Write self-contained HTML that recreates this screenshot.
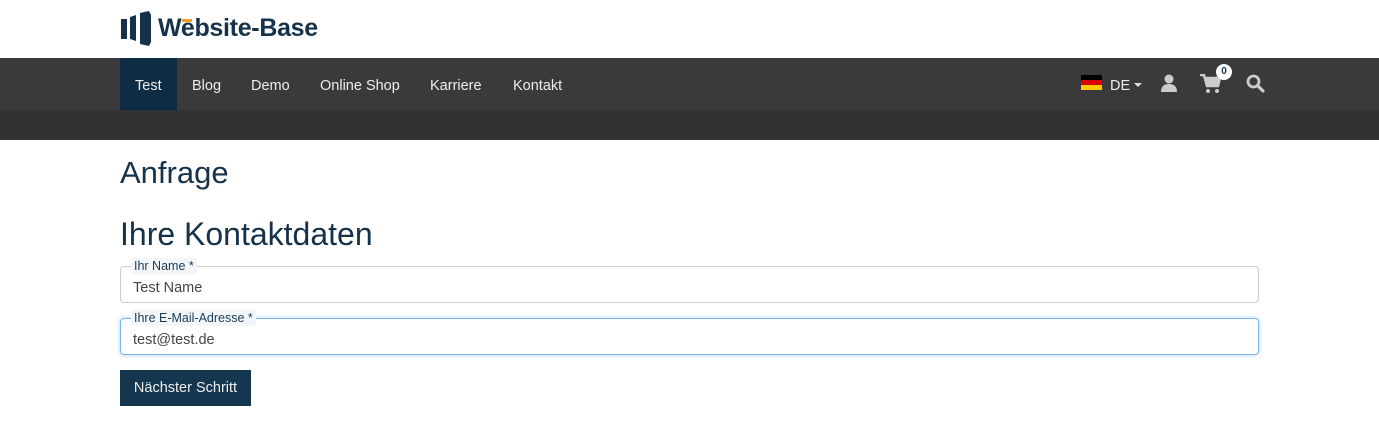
<!DOCTYPE html>
<html><head><meta charset="utf-8"><style>
*{margin:0;padding:0;box-sizing:border-box}
body{width:1379px;height:439px;background:#fff;font-family:"Liberation Sans",sans-serif;color:#333;position:relative;overflow:hidden}
.abs{position:absolute}
.nav{top:58px;left:0;width:1379px;height:52px;background:#3a3a3c}
.band{top:110px;left:0;width:1379px;height:30px;background:#323232}
.nav a{position:absolute;top:2px;height:52px;line-height:52px;color:#eee;font-size:14.5px;text-decoration:none}
h1,h2{position:absolute;font-weight:normal;color:#15324a;left:120px}
.field{position:absolute;left:120px;width:1139px;height:37px;border:1px solid #ccc;border-radius:4px;font-size:14.5px;color:#444;padding:13px 0 0 12px}
.lbl{position:absolute;left:10px;top:-9px;background:#f4f7fa;font-size:12.5px;color:#1a3b57;padding:0 3px;line-height:16px}
</style></head><body>
<svg class="abs" style="left:121px;top:11px" width="34" height="35" viewBox="0 0 34 35">
<polygon points="0,8 6,8 6,28 0,28" fill="#15324a"/>
<polygon points="9,6 15,4 15,30 9,28" fill="#15324a"/>
<polygon points="19,2 28,0 30,4 30,31 28,35 19,33" fill="#15324a"/>
</svg>
<div class="abs" style="left:158px;top:14px;font-size:25px;font-weight:bold;color:#15324a;letter-spacing:-0.3px">Website-Base</div>
<div class="abs" style="left:182px;top:19px;width:10px;height:3px;background:#f0a020"></div>
<div class="abs nav">
<div class="abs" style="left:120px;top:0;width:57px;height:52px;background:#0e2d44"></div>
<a style="left:135px">Test</a><a style="left:192px">Blog</a><a style="left:251px">Demo</a><a style="left:320px">Online Shop</a><a style="left:430px">Karriere</a><a style="left:513px">Kontakt</a>
<div class="abs" style="left:1081px;top:17px;width:21px;height:15px"><div style="height:5px;background:#000"></div><div style="height:5px;background:#d00"></div><div style="height:5px;background:#fc0"></div></div>
<a style="left:1110px">DE</a>
<div class="abs" style="left:1134px;top:25px;border-left:4px solid transparent;border-right:4px solid transparent;border-top:4px solid #ddd"></div>
<svg class="abs" style="left:1160px;top:16px" width="18" height="18" viewBox="0 0 18 18"><circle cx="9" cy="5" r="4.5" fill="#ccc"/><path d="M1 18 Q1 10 9 10 Q17 10 17 18Z" fill="#ccc"/></svg>
<svg class="abs" style="left:1200px;top:16px" width="22" height="20" viewBox="0 0 22 20"><path d="M0 1h4l3 11h11l2-8H6" stroke="#ccc" stroke-width="2.5" fill="#ccc"/><circle cx="8" cy="17" r="2" fill="#ccc"/><circle cx="17" cy="17" r="2" fill="#ccc"/></svg>
<div class="abs" style="left:1216px;top:6px;width:16px;height:16px;border-radius:8px;background:#fff;color:#15324a;font-size:10px;font-weight:bold;text-align:center;line-height:16px">0</div>
<svg class="abs" style="left:1246px;top:16px" width="19" height="19" viewBox="0 0 19 19"><circle cx="7.5" cy="7.5" r="5.5" stroke="#ccc" stroke-width="2.8" fill="none"/><path d="M11.5 11.5L17 17" stroke="#ccc" stroke-width="3.2" stroke-linecap="round"/></svg>
</div>
<div class="abs band"></div>
<h1 style="top:155px;font-size:31px">Anfrage</h1>
<h2 style="top:216px;font-size:32px">Ihre Kontaktdaten</h2>
<div class="field" style="top:266px"><span class="lbl">Ihr Name *</span>Test Name</div>
<div class="field" style="top:318px;border-color:#7cb5ec;box-shadow:0 0 4px rgba(100,160,230,.5)"><span class="lbl">Ihre E-Mail-Adresse *</span>test@test.de</div>
<div class="abs" style="left:120px;top:370px;width:131px;height:36px;background:#15364f;color:#eee;font-size:14.5px;line-height:37px;text-align:center">Nächster Schritt</div>
</body></html>
